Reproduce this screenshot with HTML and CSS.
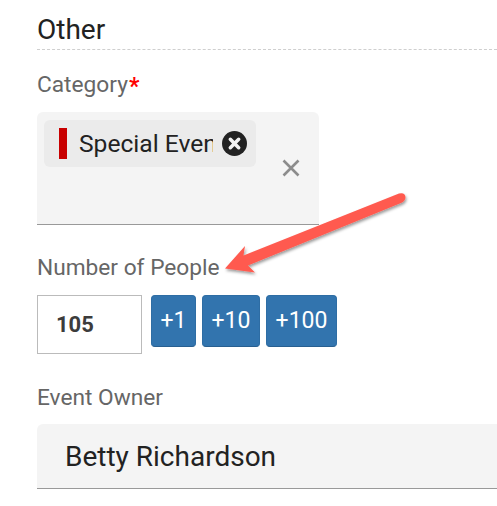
FILE: index.html
```html
<!DOCTYPE html>
<html>

<head>
    <meta charset="UTF-8">
    <meta name="viewport" content="width=device-width, initial-scale=1">
    <title>Other</title>
    <link rel="stylesheet" href="styles.css">
</head>

<body>
<main class="form">
    <h2 class="section-title">Other</h2>

    <label class="label label-category">Category<span class="required">*</span></label>
    <div class="select-box">
        <div class="chip">
            <span class="chip-color"></span>
            <span class="chip-text">Special Event</span>
            <svg class="chip-remove" width="25" height="25" viewBox="0 0 24 24">
                <circle cx="12" cy="12" r="12" fill="#222"></circle>
                <path d="M8 8l8 8M16 8l-8 8" stroke="#f2f2f2" stroke-width="3.4" stroke-linecap="round"></path>
            </svg>
        </div>
        <svg class="clear" width="18" height="18" viewBox="0 0 18 18">
            <path d="M1.500 1.500l15 15M16.500 1.500l-15 15" stroke="#8c8c8c" stroke-width="2.6"></path>
        </svg>
    </div>

    <label class="label label-people">Number of People</label>
    <div class="people-row">
        <div class="people-input">105</div>
        <button class="add add-1">+1</button>
        <button class="add add-10">+10</button>
        <button class="add add-100">+100</button>
    </div>

    <label class="label label-owner">Event Owner</label>
    <div class="owner-box">Betty Richardson</div>
</main>

<!-- annotation arrow drawn over the form -->
<svg class="arrow" width="497" height="506" viewBox="0 0 497 506">
    <defs>
        <filter id="arrow-shadow" x="-20%" y="-20%" width="140%" height="150%">
            <feDropShadow dx="1" dy="2" stdDeviation="1.8" flood-color="#000" flood-opacity="0.4"></feDropShadow>
        </filter>
    </defs>
    <path d="M225 268.500L245 246L243.500 255.500L399 193.500Q405 192 405.500 197Q405.500 201 401 203L248 265.500L255 272.500Z" fill="#ff5a4f" filter="url(#arrow-shadow)"></path>
</svg>
</body>

</html>
```

FILE: styles.css
```css
* {
    box-sizing: border-box;
}

html,
body {
    height: 100%;
    overflow: hidden;
}

body {
    margin: 0;
    background-color: white;
    font-family: Roboto, "Liberation Sans", sans-serif;
}

.form {
    padding-left: 37px;
}

.section-title {
    margin: 0;
    height: 50px;
    padding-top: 12px;
    font-size: 28px;
    line-height: 35px;
    font-weight: 400;
    color: #222;
    border-bottom: 1px dashed #cfcfcf;
}

.label {
    display: block;
    font-size: 22.7px;
    line-height: 28px;
    color: #666;
}

.label-category {
    margin-top: 21px;
}

.required {
    position: relative;
    top: 2px;
    margin-left: 1px;
    color: #f00;
    font-weight: 700;
    font-size: 23px;
    line-height: 20px;
}

.select-box {
    display: flex;
    width: 282px;
    height: 113px;
    margin-top: 13px;
    padding: 8px 0 0 7px;
    background-color: #f4f4f4;
    border-bottom: 1px solid #999;
    border-radius: 6px 6px 0 0;
}

.chip {
    display: flex;
    align-items: center;
    width: 212px;
    height: 47px;
    padding-left: 15px;
    background-color: #ebebeb;
    border-radius: 6px;
}

.chip-color {
    width: 8px;
    height: 31px;
    background-color: #c80000;
}

.chip-text {
    width: 134px;
    margin-left: 12px;
    overflow: hidden;
    white-space: nowrap;
    font-size: 24.6px;
    color: #222;
}

.chip-remove {
    margin-left: 9px;
}

.clear {
    margin: 39px 0 0 26px;
}

.label-people {
    margin-top: 29px;
}

.people-row {
    display: flex;
    align-items: flex-start;
    margin-top: 13px;
}

.people-input {
    width: 105px;
    height: 59px;
    padding-left: 18px;
    border: 1px solid #bbb;
    font-size: 22px;
    font-weight: 700;
    line-height: 57px;
    color: #3c3c3c;
}

.add {
    height: 52px;
    margin: 0 0 0 6px;
    padding: 0 0 2px;
    background-color: #3274ae;
    border: 1px solid #2e6da4;
    border-bottom-color: #285f90;
    border-radius: 4px;
    font-family: inherit;
    font-size: 23px;
    color: white;
}

.add-1 {
    width: 45px;
    margin-left: 9px;
}

.add-10 {
    width: 58px;
}

.add-100 {
    width: 71px;
}

.label-owner {
    margin-top: 30px;
}

.owner-box {
    height: 65px;
    margin-top: 12px;
    padding-left: 28px;
    background-color: #f4f4f4;
    border-bottom: 1px solid #999;
    border-radius: 6px 0 0 0;
    font-size: 28px;
    line-height: 65px;
    color: #222;
}

.arrow {
    position: absolute;
    top: 0;
    left: 0;
    pointer-events: none;
}
```
